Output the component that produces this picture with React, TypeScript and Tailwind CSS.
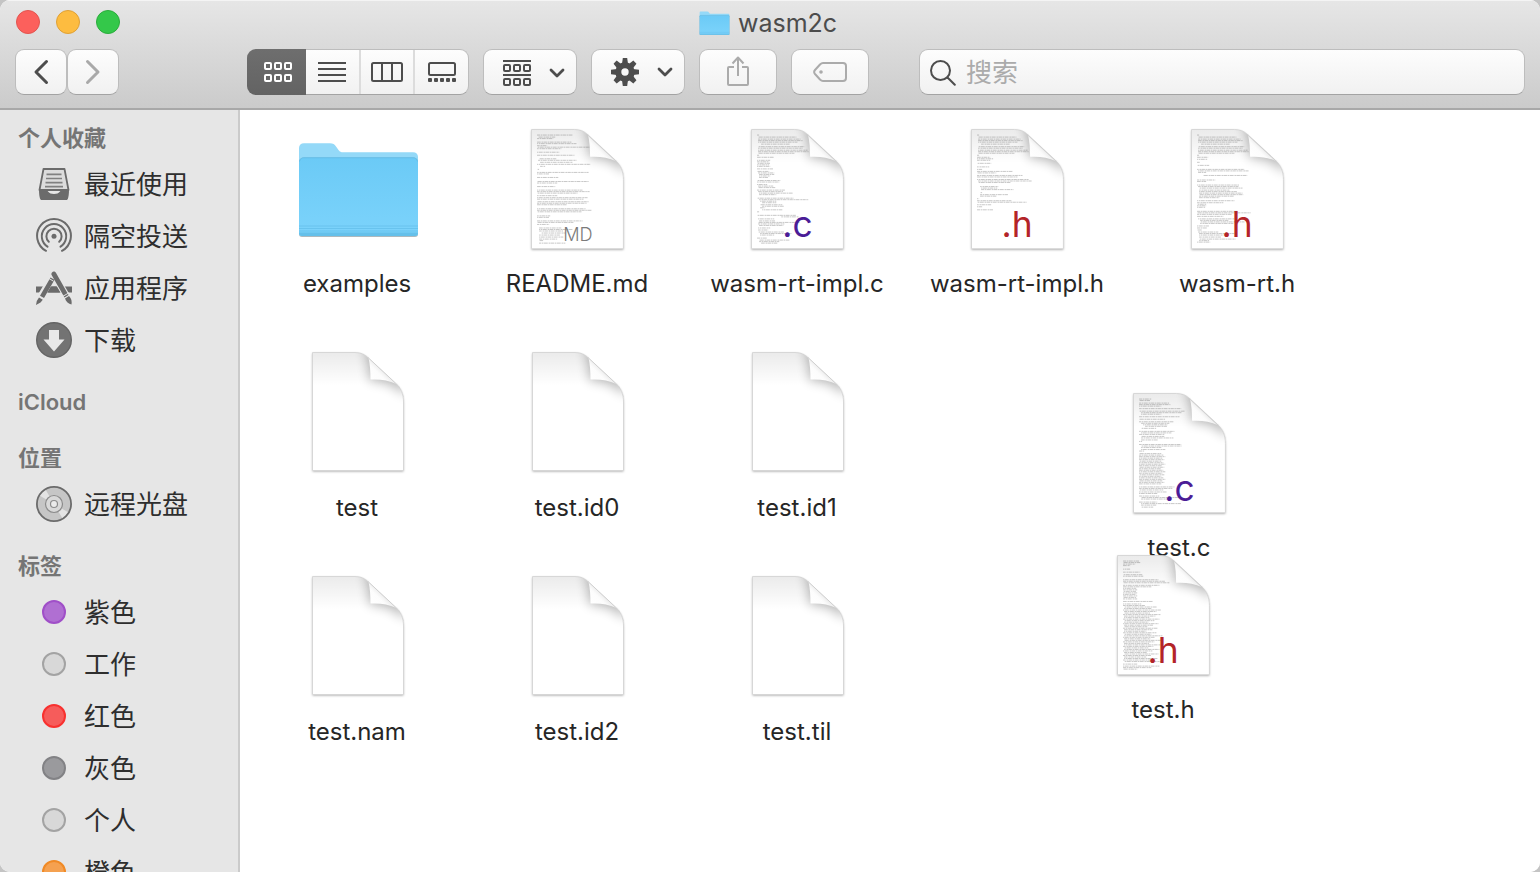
import type { ReactNode } from "react";

type Line = [y: number, x: number, width: number];

type FileItem = {
  name: string;
  kind: "folder" | "blank" | "text";
  badge?: string;
  badgeColor?: string;
  lines?: Line[];
};

/* ---------- miniature page previews ---------- */

const header: Line[] = [
  [6, 6, 2], [8, 7, 38], [10, 7, 42], [11.5, 7, 44], [13, 7, 39], [15, 10, 29], [17.5, 7, 46],
  [19, 7, 44], [21, 7, 49], [22.5, 7, 50], [24, 7, 36], [26, 6, 2],
];

const readmeLines: Line[] = [
  [6, 6, 35], [8, 7, 17], [9.5, 6, 16], [13, 6, 34], [14.5, 6, 39], [16.5, 6, 10], [18, 6, 53],
  [19.5, 6, 24], [23, 6, 22], [26, 6, 37], [29.5, 8, 17], [31, 7, 38], [33, 9, 32], [35, 6, 53],
  [37, 9, 5], [40, 6, 2], [43, 6, 51], [44.5, 6, 12], [48, 6, 21], [52, 6, 51], [53.5, 6, 20],
  [57, 6, 18], [60.5, 6, 45], [62, 6, 52], [63.5, 6, 40], [66, 6, 20], [68, 6, 50], [69.5, 6, 46],
  [72, 6, 51], [73.5, 6, 49], [75, 6, 30], [79, 6, 48], [80.5, 6, 54], [82, 6, 44], [86, 6, 13],
  [87.5, 6, 12], [91, 6, 45], [92.5, 6, 36], [94.5, 6, 12], [98, 8, 22], [99.5, 8, 33], [101, 8, 24],
  [103, 10, 24], [105, 8, 21], [107, 8, 24], [109, 8, 18], [110.5, 8, 4], [113, 8, 26],
];

const implCLines: Line[] = [
  ...header, [28, 6, 17], [31, 6, 13], [32.5, 6, 12], [34, 6, 13], [35.5, 6, 12], [37, 6, 13], [39.5, 6, 16],
  [42, 6, 12], [43.5, 7, 16], [45, 8, 15], [46.5, 8, 11], [48, 8, 9], [51, 6, 23], [52.5, 6, 22],
  [55, 6, 10], [56.5, 7, 15], [58, 7, 17], [60.5, 6, 28], [62, 7, 25], [63.5, 8, 34], [65, 8, 17],
  [68.5, 6, 36], [70, 8, 49], [71.5, 9, 16], [73, 11, 14], [75, 9, 22], [76.5, 11, 22], [78, 9, 5],
  [80, 11, 20], [82, 6, 2], [85.5, 6, 39], [87, 30, 17], [89, 7, 16], [91, 8, 16], [92.5, 7, 41],
  [94, 7, 26], [95.5, 8, 24], [98, 7, 12], [100, 7, 10], [102, 7, 26], [103.5, 9, 31], [105, 9, 14],
  [108, 6, 10], [110, 8, 30], [111.5, 8, 20], [113, 10, 16],
];

const implHLines: Line[] = [
  ...header, [28, 6, 13], [29.5, 6, 16], [31, 6, 13], [34, 6, 14], [37.5, 6, 12], [40, 6, 5],
  [42, 6, 35], [43.5, 6, 19], [46, 6, 45], [47.5, 6, 40], [50, 6, 51], [51.5, 7, 53], [53, 7, 32],
  [57, 9, 18], [58.5, 10, 16], [60, 10, 32], [63, 9, 2], [65, 9, 28], [66.5, 9, 16], [69, 6, 2],
  [71, 6, 34], [72.5, 6, 49], [75, 6, 14], [77, 6, 5], [80, 6, 16],
];

const rtHLines: Line[] = [
  ...header, [28, 6, 11], [30, 6, 10], [33, 6, 3], [36, 6, 12], [40, 6, 47], [41.5, 7, 50], [43, 7, 8],
  [46, 12, 44], [50.5, 6, 18], [52, 6, 9], [55.5, 6, 42], [57, 7, 40], [58.5, 8, 43], [60.5, 8, 30],
  [62, 8, 38], [63.5, 8, 43], [65, 8, 44], [66.5, 8, 35], [68, 8, 20], [71, 6, 37], [73, 6, 26],
  [74.5, 6, 9], [76, 6, 9], [77.5, 6, 8], [81.5, 6, 40], [83, 6, 53], [84.5, 6, 35], [86.5, 6, 26],
  [89, 7, 36], [90.5, 9, 28], [92, 9, 44], [93.5, 9, 33], [96, 6, 12], [98, 6, 10], [100, 6, 5],
  [102, 7, 20], [103.5, 8, 35], [105, 8, 24], [107, 8, 22], [109, 8, 36], [110.5, 8, 10], [112, 6, 13],
];

const testCLines: Line[] = [
  [6, 6, 12], [7.5, 6, 11], [10, 6, 30], [11.5, 6, 31], [13, 6, 22], [15.5, 6, 42], [18, 6, 45],
  [19.5, 8, 40], [21, 8, 20], [23.5, 6, 40], [26, 6, 26], [28.5, 6, 34], [30, 8, 28], [31.5, 10, 24],
  [33, 12, 22], [35, 8, 15], [38, 6, 35], [39.5, 8, 30], [41, 6, 25], [43, 8, 23], [44.5, 8, 32],
  [46.5, 8, 17], [48, 6, 3], [51, 6, 42], [52.5, 8, 40], [54, 8, 20], [56, 8, 24], [57.5, 6, 5],
  ...Array.from({ length: 21 }, (_, i): Line => [60 + i * 1.5, 6, 22 + ((i * 7) % 5)]),
  [93, 6, 35], [94.5, 6, 33], [96, 6, 24], [98, 6, 28], [99.5, 6, 18], [102, 6, 20], [103.5, 8, 38],
  [105, 8, 30], [108, 6, 18], [109.5, 8, 40], [111, 8, 15], [113, 8, 12],
];

const testHLines: Line[] = [
  [6, 6, 16], [7.5, 6, 17], [9, 6, 12], [10.5, 6, 7], [14, 6, 7], [17, 6, 17], [19.5, 6, 19],
  [21, 6, 20], [24.5, 6, 35], [26, 6, 42], [27.5, 6, 46], [30, 6, 36], [31.5, 6, 28],
  ...Array.from({ length: 8 }, (_, i): Line => [33 + i * 1.5, 6, 13 + (i % 2)]),
  [46, 6, 30], [48.5, 6, 18],
  ...Array.from({ length: 38 }, (_, i): Line => [50 + i * 1.5, 6 + (i % 3 ? 1 : 0), 22 + ((i * 11) % 17)]),
  [108, 6, 14], [110, 6, 36], [111.5, 6, 28], [113, 6, 14],
];

const C = "#4b1c96";
const H = "#b32428";

const rows: FileItem[][] = [
  [
    { name: "examples", kind: "folder" },
    { name: "README.md", kind: "text", badge: "MD", badgeColor: "#7b7b7b", lines: readmeLines },
    { name: "wasm-rt-impl.c", kind: "text", badge: ".c", badgeColor: C, lines: implCLines },
    { name: "wasm-rt-impl.h", kind: "text", badge: ".h", badgeColor: H, lines: implHLines },
    { name: "wasm-rt.h", kind: "text", badge: ".h", badgeColor: H, lines: rtHLines },
  ],
  [
    { name: "test", kind: "blank" },
    { name: "test.id0", kind: "blank" },
    { name: "test.id1", kind: "blank" },
  ],
  [
    { name: "test.nam", kind: "blank" },
    { name: "test.id2", kind: "blank" },
    { name: "test.til", kind: "blank" },
  ],
];

const testC: FileItem = { name: "test.c", kind: "text", badge: ".c", badgeColor: C, lines: testCLines };
const testH: FileItem = { name: "test.h", kind: "text", badge: ".h", badgeColor: H, lines: testHLines };

/* ---------- file icons ---------- */

const PAGE = "M.5 .5H43C49 .5 53 2.500 56.500 6L83.500 31C89 36 91.500 42 91.500 50V118.500H.5Z";
const FOLD = "M56.500 6C58 12 58.500 20 58.500 27.500C68 27 76 28 84.500 32Z";

function SharedDefs() {
  return (
    <svg className="absolute size-0" aria-hidden="true">
      <defs>
        <clipPath id="page-clip"><path d={PAGE} /></clipPath>
        <linearGradient id="page-top" x1="0" y1="0" x2="0" y2="1">
          <stop offset="0" stopColor="#000" stopOpacity=".08" />
          <stop offset=".28" stopColor="#000" stopOpacity="0" />
        </linearGradient>
        <linearGradient id="fold-fill" gradientUnits="userSpaceOnUse" x1="58" y1="27" x2="70" y2="15">
          <stop offset="0" stopColor="#fff" />
          <stop offset=".6" stopColor="#fcfcfc" />
          <stop offset="1" stopColor="#e6e6e6" />
        </linearGradient>
        <filter id="fold-shadow" x="-60%" y="-60%" width="220%" height="260%">
          <feGaussianBlur stdDeviation="6" />
        </filter>
        <filter id="page-shadow" x="-10%" y="-10%" width="120%" height="120%">
          <feDropShadow dx="0" dy="1" stdDeviation="1" floodColor="#000" floodOpacity=".35" />
        </filter>
        <linearGradient id="folder-front" x1="0" y1="0" x2="0" y2="1">
          <stop offset="0" stopColor="#6bcaf6" />
          <stop offset="1" stopColor="#7cd3fb" />
        </linearGradient>
      </defs>
    </svg>
  );
}

function PageIcon({ file }: { file: FileItem }) {
  const isText = file.kind === "text";
  const isMd = file.badge === "MD";
  return (
    <svg viewBox="0 0 128 128" className="size-32" aria-hidden="true">
      <g transform={isText ? "translate(18 4) scale(1.01)" : "translate(19 3)"}>
        <path d={PAGE} fill="#fff" filter="url(#page-shadow)" />
        <g clipPath="url(#page-clip)">
          <path d={PAGE} fill="url(#page-top)" />
          <path d="M52 -4C57 8 57 20 58 29C72 28 82 33 94 44V20L66 -6Z" fill="#000" opacity=".28" filter="url(#fold-shadow)" />
        </g>
        {file.lines?.map(([y, x, w], i) => (
          <path
            key={i}
            d={`M${x} ${y}h${w}`}
            stroke="#4a4a4a"
            strokeWidth=".8"
            strokeOpacity=".38"
            strokeDasharray="3 .6 1.500 .5 4 .8 2 .4"
            strokeDashoffset={(i * 5) % 9}
          />
        ))}
        <path d={PAGE} fill="none" stroke="#cfcfcf" strokeWidth=".8" />
        <path d="M56.500 6L66 1H86L84.500 32Z" fill="#fff" />
        <path d={FOLD} fill="url(#fold-fill)" />
        <path d="M56 5.500L84.500 32" stroke="#cfcfcf" strokeWidth="1" />
        {file.badge && (
          <text
            x="61"
            y={isMd ? 111 : 107}
            textAnchor="end"
            fill={file.badgeColor}
            fontSize={isMd ? 18 : 35}
            fontWeight={isMd ? 300 : 400}
          >
            {file.badge}
          </text>
        )}
      </g>
    </svg>
  );
}

function FolderIcon({ className }: { className: string }) {
  return (
    <svg viewBox="4 16 123 100" className={className} aria-hidden="true">
      <path d="M6 109V23C6 20 8 18.300 11 18.300H37C40 18.300 41.500 19.300 43 21.500L45.500 25C47 27 48 27.200 50 27.200H120C123 27.200 125 29 125 32V109Z" fill="#94d9f8" />
      <path d="M6 37C6 34 8 32.500 11 32.500H120C123 32.500 125 34 125 37V109C125 111 124 112 122 112H9C7 112 6 111 6 109Z" fill="#8a9ba3" opacity=".7" />
      <path d="M6 37C6 34 8 32.500 11 32.500H120C123 32.500 125 34 125 37V108C125 110 124 111 122 111H9C7 111 6 110 6 108Z" fill="url(#folder-front)" />
      <path d="M6.500 36.500C7 34 9 32.800 11 32.800H120C122 32.800 124 34 124.500 36.500" fill="none" stroke="#61bde8" strokeWidth=".8" />
      <path d="M6 101H125M6 103.500H125M6 106H125" stroke="#66c1ec" strokeWidth=".9" />
      <path d="M6 107.500H125V108C125 110 124 111 122 111H9C7 111 6 110 6 108Z" fill="#65c0ea" />
    </svg>
  );
}

function FileTile({ file }: { file: FileItem }) {
  return (
    <button type="button" className="flex h-56 w-[220px] shrink-0 flex-col items-center gap-[15px]">
      {file.kind === "folder" ? (
        <span className="flex size-32 items-center justify-center pl-[3px] pt-1">
          <FolderIcon className="h-[100px] w-[123px]" />
        </span>
      ) : (
        <PageIcon file={file} />
      )}
      <span className="text-2xl leading-8 text-[#262626]">{file.name}</span>
    </button>
  );
}

/* ---------- toolbar ---------- */

const control =
  "flex h-[46px] items-center justify-center rounded-[9px] border border-[#bdbdbd] border-b-[#a3a3a3] bg-linear-to-b from-[#fdfdfd] to-[#f1f1f1]";

function Squares({ y }: { y: number }) {
  return (
    <>
      {[1, 11, 21].map((x) => (
        <rect key={x} x={x} y={y} width="6" height="6" rx="1" fill="none" stroke="currentColor" strokeWidth="2" />
      ))}
    </>
  );
}

function Chevron() {
  return (
    <svg viewBox="0 0 16 10" className="h-2.5 w-4" fill="none" stroke="#4d4d4d" strokeWidth="2.8" strokeLinecap="round" strokeLinejoin="round" aria-hidden="true">
      <path d="M2 2L8 8L14 2" />
    </svg>
  );
}

function Toolbar() {
  return (
    <div className="flex items-center px-[15px]">
      <div className="flex">
        <button type="button" aria-label="后退" className={`${control} w-[52px]`}>
          <svg viewBox="0 0 16 26" className="h-[26px] w-4" fill="none" stroke="#4d4d4d" strokeWidth="3" strokeLinecap="round" strokeLinejoin="round"><path d="M13.500 2.500L3 13L13.500 23.500" /></svg>
        </button>
        <button type="button" aria-label="前进" className={`${control} w-[52px]`}>
          <svg viewBox="0 0 16 26" className="h-[26px] w-4" fill="none" stroke="#a9a9a9" strokeWidth="3" strokeLinecap="round" strokeLinejoin="round"><path d="M2.500 2.500L13 13L2.500 23.500" /></svg>
        </button>
      </div>

      <div className="ml-32 flex h-[46px] w-[222px] rounded-[9px] border border-[#bdbdbd] border-b-[#a3a3a3] bg-linear-to-b from-[#fdfdfd] to-[#f1f1f1] text-[#4d4d4d]">
        <button type="button" aria-label="图标" aria-pressed="true" className="-my-px -ml-px flex w-[59px] items-center justify-center rounded-l-[9px] bg-linear-to-b from-[#6e6e6e] to-[#636363] pl-[3px] text-white">
          <svg viewBox="0 0 28 20" className="h-5 w-7"><Squares y={1} /><Squares y={13} /></svg>
        </button>
        <button type="button" aria-label="列表" className="flex flex-1 items-center justify-center border-r-2 border-[#dcdcdc]">
          <svg viewBox="0 0 28 20" className="h-5 w-7" fill="none" stroke="currentColor" strokeWidth="2"><path d="M0 1H28M0 7H28M0 13H28M0 19H28" /></svg>
        </button>
        <button type="button" aria-label="分栏" className="flex flex-1 items-center justify-center border-r-2 border-[#dcdcdc]">
          <svg viewBox="0 0 32 20" className="h-5 w-8" fill="none" stroke="currentColor" strokeWidth="2"><rect x="1" y="1" width="30" height="18" rx="1.500" /><path d="M11 1V19M21 1V19" /></svg>
        </button>
        <button type="button" aria-label="画廊" className="flex flex-1 items-center justify-center">
          <svg viewBox="0 0 28 20" className="h-5 w-7" fill="none" stroke="currentColor" strokeWidth="2">
            <rect x="1" y="1" width="26" height="12" rx="1.500" />
            {[0, 6, 12, 18, 24].map((x) => <rect key={x} x={x} y="16" width="4" height="4" rx="1" fill="currentColor" stroke="none" />)}
          </svg>
        </button>
      </div>

      <div className="ml-3.5 flex gap-3.5">
        <button type="button" aria-label="排列方式" className={`${control} w-[94px] gap-[18px] pl-2 pt-0.5 text-[#4d4d4d]`}>
          <svg viewBox="0 0 28 26" className="h-[26px] w-7"><path d="M0 1H28M0 15H28" stroke="currentColor" strokeWidth="2" /><Squares y={5} /><Squares y={19} /></svg>
          <Chevron />
        </button>
        <button type="button" aria-label="操作" className={`${control} w-[94px] gap-[18px] pl-2`}>
          <svg viewBox="-14 -14 28 28" className="size-7" aria-hidden="true">
            {[0, 45, 90, 135, 180, 225, 270, 315].map((a) => (
              <path key={a} d="M-3 -8L-2.200 -14H2.200L3 -8Z" transform={`rotate(${a})`} fill="#4d4d4d" />
            ))}
            <circle r="6.700" fill="none" stroke="#4d4d4d" strokeWidth="6" />
          </svg>
          <Chevron />
        </button>
        <button type="button" aria-label="共享" className={`${control} w-[78px]`}>
          <svg viewBox="0 0 24 32" className="h-8 w-6" fill="none" stroke="#ababab" strokeWidth="2" strokeLinejoin="round"><path d="M8 11H3C2 11 2 11 2 12V28C2 29 2 29 3 29H21C22 29 22 29 22 28V12C22 11 22 11 21 11H16M12 20V1.500M6.500 7.500L12 1.500L17.500 7.500" /></svg>
        </button>
        <button type="button" aria-label="编辑标签" className={`${control} w-[78px]`}>
          <svg viewBox="0 0 34 20" className="h-5 w-[34px]" fill="none" stroke="#ababab" strokeWidth="2" strokeLinejoin="round"><path d="M10 1H30C32 1 33 2 33 4V16C33 18 32 19 30 19H10C9 19 8 18.500 7 17.500L2 12C.8 10.600 .8 9.400 2 8L7 2.500C8 1.500 9 1 10 1Z" /><circle cx="8" cy="10" r="1.800" fill="#ababab" stroke="none" /></svg>
        </button>
      </div>

      <label className={`${control} ml-[50px] min-w-0 flex-1 justify-start gap-2.5 pl-2.5 pt-0.5`}>
        <svg viewBox="0 0 26 26" className="size-[26px] shrink-0" fill="none" stroke="#4d4d4d" strokeWidth="2" strokeLinecap="round"><circle cx="10.500" cy="10.500" r="9.500" /><path d="M17.500 17.500L24.800 24.800" /></svg>
        <input type="search" aria-label="搜索" placeholder="搜索" className="min-w-0 flex-1 bg-transparent text-[26px] leading-9 outline-none placeholder:text-[#ababab]" />
      </label>
    </div>
  );
}

/* ---------- sidebar ---------- */

function SidebarItem({ icon, children }: { icon: ReactNode; children: string }) {
  return (
    <li>
      <a href="#" className="flex h-[52px] items-center gap-3 pl-9 text-[26px] text-[#2e2e2e]">
        <span className="flex w-9 shrink-0 justify-center">{icon}</span>
        <span>{children}</span>
      </a>
    </li>
  );
}

function SidebarSection({ title, children }: { title: string; children?: ReactNode }) {
  return (
    <section>
      <h2 className="flex h-10 items-center pl-[18px] text-[22px] font-semibold text-[#757575]">{title}</h2>
      {children && <ul>{children}</ul>}
    </section>
  );
}

const RecentIcon = (
  <svg viewBox="0 0 36 36" className="size-9" aria-hidden="true">
    <path d="M7.500 3H28.500L32.500 24H3.500Z" fill="#dcdcdc" stroke="#6b6b6b" strokeWidth="1.800" strokeLinejoin="round" />
    <path d="M10.500 8.300H25.500M10 12.500H26M9.500 16.700H26.500M9 20.700H27" stroke="#808080" strokeWidth="1.700" />
    <path d="M3 24H10C12 24 12 28 18 28S24 24 26 24H33C33 28 32.500 31 32 32.500C31.500 33.700 31 34 30 34H6C5 34 4.500 33.700 4 32.500C3.500 31 3 28 3 24Z" fill="#6b6b6b" />
  </svg>
);

const AirDropIcon = (
  <svg viewBox="0 0 36 36" className="size-9" fill="none" stroke="#6b6b6b" strokeWidth="2" strokeLinecap="round" aria-hidden="true">
    <path d="M10 32.800A16.900 16.900 0 1 1 26 32.800" />
    <path d="M11.500 28.600A12.200 12.200 0 1 1 24.500 28.600" />
    <path d="M12.800 23.800A7.600 7.600 0 1 1 23.200 23.800" />
    <circle cx="18" cy="18.300" r="2.500" fill="#6b6b6b" stroke="none" />
  </svg>
);

const AppsIcon = (
  <svg viewBox="0 0 36 36" className="size-9" aria-hidden="true">
    <path d="M0 16.500H36V22.500H0Z" fill="#6b6b6b" />
    <path d="M4.500 27L18 4.500L31 27" fill="none" stroke="#e6e6e6" strokeWidth="7" />
    <path d="M12 22.500L15.500 16.500H20.500L24 22.500Z" fill="#6b6b6b" />
    <path d="M16 2.500C17 .8 19 1.200 19.800 2.600L32.500 25L28.500 27.500L15.600 5C15.200 4 15.400 3.300 16 2.500Z" fill="#6b6b6b" />
    <path d="M29 28.500L33 26C35.500 28.500 36 31.500 35.500 34.500C32.500 33.800 30 32 29 28.500Z" fill="#6b6b6b" />
    <path d="M14.500 7.500L18.500 9.800L8 28L4 25.700ZM3 27.500L6.800 29.700L4.500 32.500L0 35L.8 31Z" fill="#6b6b6b" />
    <path d="M13 8.500L17.500 11.200M26.500 26.500L33 22.800" stroke="#e6e6e6" strokeWidth="1" />
  </svg>
);

const DownloadIcon = (
  <svg viewBox="0 0 36 36" className="size-9" aria-hidden="true">
    <circle cx="18" cy="18" r="17.300" fill="#737373" stroke="#646464" strokeWidth="1.400" />
    <path d="M13 8H23V17.500H28.500L18 29.500L7.500 17.500H13Z" fill="#e9e9e9" />
  </svg>
);

const DiscIcon = (
  <svg viewBox="0 0 36 36" className="size-9" aria-hidden="true">
    <circle cx="18" cy="18" r="17" fill="#c6c6c6" />
    <path d="M18 18L3.500 9.500L9.500 3.500ZM18 18L32.500 26.500L26.500 32.500Z" fill="#e4e4e4" />
    <circle cx="18" cy="18" r="17.100" fill="none" stroke="#6b6b6b" strokeWidth="1.800" />
    <circle cx="18" cy="18" r="8.500" fill="#d9d9d9" stroke="#8c8c8c" strokeWidth="1.200" />
    <circle cx="18" cy="18" r="3.500" fill="#ebebeb" stroke="#8c8c8c" strokeWidth="1.200" />
  </svg>
);

const tags = [
  { name: "紫色", style: "border-[#a04fc8] bg-[#b06fd2]" },
  { name: "工作", style: "border-[#a3a3a3] bg-[#d8d8d8]" },
  { name: "红色", style: "border-[#f8312f] bg-[#f65c5b]" },
  { name: "灰色", style: "border-[#828285] bg-[#9a9a9d]" },
  { name: "个人", style: "border-[#a3a3a3] bg-[#d8d8d8]" },
  { name: "橙色", style: "border-[#f08a26] bg-[#f5a150]" },
];

function Sidebar() {
  return (
    <nav className="flex w-60 shrink-0 flex-col gap-4 overflow-hidden border-r-2 border-[#cbcbcb] bg-[#e6e6e6] pt-2">
      <SidebarSection title="个人收藏">
        <SidebarItem icon={RecentIcon}>最近使用</SidebarItem>
        <SidebarItem icon={AirDropIcon}>隔空投送</SidebarItem>
        <SidebarItem icon={AppsIcon}>应用程序</SidebarItem>
        <SidebarItem icon={DownloadIcon}>下载</SidebarItem>
      </SidebarSection>
      <SidebarSection title="iCloud" />
      <SidebarSection title="位置">
        <SidebarItem icon={DiscIcon}>远程光盘</SidebarItem>
      </SidebarSection>
      <SidebarSection title="标签">
        {tags.map((tag) => (
          <SidebarItem key={tag.name} icon={<span className={`size-6 rounded-full border-2 ${tag.style}`} />}>
            {tag.name}
          </SidebarItem>
        ))}
      </SidebarSection>
    </nav>
  );
}

/* ---------- window ---------- */

export default function App() {
  return (
    <div className="h-screen bg-[#c4c4c4] font-['Inter','Noto_Sans_CJK_SC',sans-serif]">
      <SharedDefs />
      <div className="flex h-full flex-col overflow-hidden rounded-[10px] bg-white">
        <header className="flex h-[110px] shrink-0 flex-col border-b-2 border-[#a8a8a8] border-t border-t-[#f4f4f4] bg-linear-to-b from-[#e6e6e6] to-[#cbcbcb]">
          <div className="grid h-12 grid-cols-[1fr_auto_1fr] items-center pb-1">
            <div className="flex gap-4 pb-0.5 pl-4">
              <button type="button" aria-label="关闭" className="size-6 rounded-full border border-[#e2544f] bg-[#fc605c]" />
              <button type="button" aria-label="最小化" className="size-6 rounded-full border border-[#dfa035] bg-[#fdbc40]" />
              <button type="button" aria-label="缩放" className="size-6 rounded-full border border-[#2bac3c] bg-[#34c84a]" />
            </div>
            <h1 className="flex items-center gap-2 pr-1 text-[25px] leading-9 text-[#4c4c4c]">
              <FolderIcon className="h-[25px] w-[31px]" />
              wasm2c
            </h1>
          </div>
          <Toolbar />
        </header>
        <div className="flex min-h-0 flex-1">
          <Sidebar />
          <main className="relative min-w-0 flex-1 overflow-hidden bg-white pl-[7px] pt-[15px]">
            {rows.map((row, i) => (
              <div key={i} className="flex">
                {row.map((file) => <FileTile key={file.name} file={file} />)}
              </div>
            ))}
            <div className="absolute left-[829px] top-[279px]"><FileTile file={testC} /></div>
            <div className="absolute left-[813px] top-[441px]"><FileTile file={testH} /></div>
          </main>
        </div>
      </div>
    </div>
  );
}
